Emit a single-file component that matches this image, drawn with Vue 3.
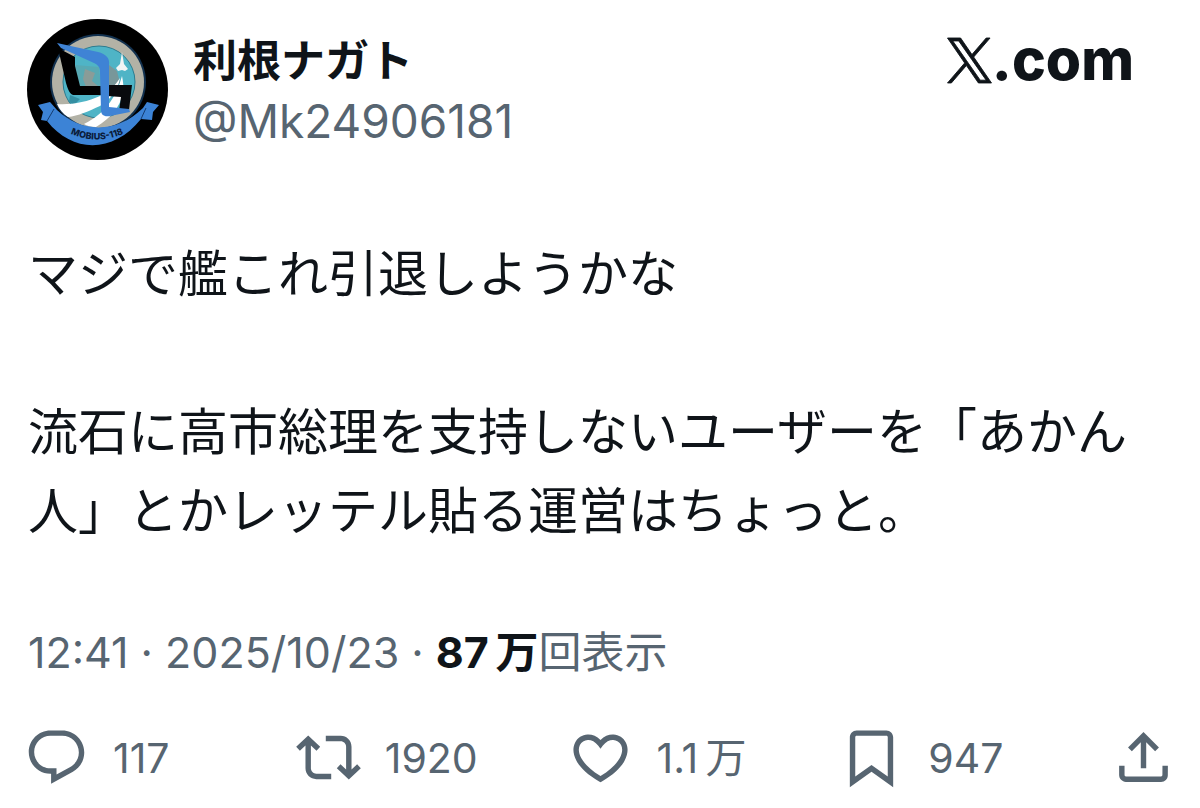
<template>
  <article class="post">
    <header class="head">
      <a class="author" href="#">
        <svg class="avatar" viewBox="0 0 141 141" aria-hidden="true">
          <circle cx="70.500" cy="70.500" r="70.500" fill="#000" />
          <circle cx="71" cy="63" r="48" fill="#12314f" />
          <circle cx="71" cy="63" r="46" fill="#b3b2a6" />
          <circle cx="72" cy="63" r="36" fill="#4fb4c6" stroke="#2c7c90" stroke-width="1" />
          <path d="M48 46l24 2 2 22-24 4z" fill="#58a9b3" />
          <path d="M58 50l10 4-3 8 6 5-12 1-3-8z" fill="#8a9c98" />
          <path d="M82 46l8 6 3 12-10 4-3-8z" fill="#78979a" />
          <path d="M43 76l10 4-6 6-5-3zM86 80l6 2-5 10h-5z" fill="#348fa2" />
          <path d="M30 85c14 1 30-2 43-8 9-5 15-10 20-18-2 12-10 22-20 28-11 5-22 10-32 11-5-3-9-8-11-13z" fill="#fff" />
          <path d="M95 57c-5 18-14 36-38 48 3 2 7 3 12 3 15-9 24-20 27-34 1-6 0-12-1-17z" fill="#fff" />
          <path d="M95 33l2 12 4 5-3 2-3-1-4 1-2-3 4-4z" fill="#f2f5f5" />
          <path d="M31 29l17 9v9l5 20h21v9H46c-4-2-5-6-7-12z" fill="#000" />
          <path d="M80 66h25l-3 25-10 1 2-14-14-1z" fill="#080a0d" />
          <path d="M30 24l41 9c8 2 12 6 11 13v42l20 2 1 3-20 4c-6 1-9-1-9-6l-1-38c0-5-2-7-6-9L34 29z" fill="#3f83d5" />
          <path d="M11 86l12-3 7 8c24 23 60 24 86-2l4-6 12 3-6 7-1 8-11-1c-27 34-68 35-94 2l-6-1 2-8z" fill="#3c83d6" />
          <path d="M20 102l7-12M114 100l5-11" stroke="#153c70" stroke-width="1" />
          <path id="ribbon" d="M36 111q34 19 68 0" fill="none" />
          <text class="motto"><textPath href="#ribbon" startOffset="50%" text-anchor="middle">MOBIUS-118</textPath></text>
        </svg>
        <span class="names">
          <strong class="name">利根ナガト</strong>
          <span class="handle">@Mk24906181</span>
        </span>
      </a>
      <a class="brand" href="#">
        <svg class="brand-mark" viewBox="0 0 1200 1227" role="img" aria-label="X">
          <path d="M714.163 519.284L1160.89 0H1055.03L667.137 450.887L357.328 0H0L468.492 681.821L0 1226.37H105.866L515.491 750.218L842.672 1226.37H1200L714.137 519.284H714.163ZM569.165 687.828L521.697 619.934L144.011 79.694H306.615L611.412 515.685L658.88 583.579L1055.08 1150.3H892.476L569.165 687.854V687.828Z" />
        </svg>
        <span>.com</span>
      </a>
    </header>

    <div class="body">
      <p v-for="(paragraph, i) in paragraphs" :key="i">{{ paragraph }}</p>
    </div>

    <p class="meta">
      <time datetime="2025-10-23T12:41">12:41 · 2025/10/23</time> · <strong>87&thinsp;万</strong>回表示
    </p>

    <footer class="actions">
      <button v-for="action in actions" :key="action.label" type="button" class="action" :aria-label="action.label">
        <svg class="icon" viewBox="0 0 24 24" aria-hidden="true"><path :d="action.icon" /></svg>
        <span v-if="action.count" class="count">{{ action.count }}</span>
      </button>
    </footer>
  </article>
</template>

<script setup>
const paragraphs = [
  'マジで艦これ引退しようかな',
  '流石に高市総理を支持しないユーザーを「あかん人」とかレッテル貼る運営はちょっと。',
]

const actions = [
  {
    label: '返信',
    count: '117',
    icon: 'M1.751 10c0-4.42 3.584-8 8.005-8h4.366c4.49 0 8.129 3.64 8.129 8.13 0 2.96-1.607 5.68-4.196 7.11l-8.054 4.46v-3.69h-.067c-4.49.1-8.183-3.51-8.183-8.01zm8.005-6c-3.317 0-6.005 2.69-6.005 6 0 3.37 2.77 6.08 6.138 6.01l.351-.01h1.761v2.3l5.087-2.81c1.951-1.08 3.163-3.13 3.163-5.36 0-3.39-2.744-6.13-6.129-6.13H9.756z',
  },
  {
    label: 'リポスト',
    count: '1920',
    icon: 'M4.5 3.88l4.432 4.14-1.364 1.46L5.5 7.55V16c0 1.1.896 2 2 2H13v2H7.5c-2.209 0-4-1.79-4-4V7.55L1.432 9.48.068 8.02 4.5 3.88zM16.5 6H11V4h5.5c2.209 0 4 1.79 4 4v8.45l2.068-1.93 1.364 1.46-4.432 4.14-4.432-4.14 1.364-1.46 2.068 1.93V8c0-1.1-.896-2-2-2z',
  },
  {
    label: 'いいね',
    count: '1.1\u2009万',
    icon: 'M16.697 5.5c-1.222-.06-2.679.51-3.89 2.16l-.805 1.09-.806-1.09C9.984 6.01 8.526 5.44 7.304 5.5c-1.243.07-2.349.78-2.91 1.91-.552 1.12-.633 2.78.479 4.82 1.074 1.97 3.257 4.27 7.129 6.61 3.87-2.34 6.052-4.64 7.126-6.61 1.111-2.04 1.03-3.7.477-4.82-.561-1.13-1.666-1.84-2.908-1.91zm4.187 7.69c-1.351 2.48-4.001 5.12-8.379 7.67l-.503.3-.504-.3c-4.379-2.55-7.029-5.19-8.382-7.67-1.36-2.5-1.41-4.86-.514-6.67.887-1.79 2.647-2.91 4.601-3.01 1.651-.09 3.368.56 4.798 2.01 1.429-1.45 3.146-2.1 4.796-2.01 1.954.1 3.714 1.22 4.601 3.01.896 1.81.846 4.17-.514 6.67z',
  },
  {
    label: 'ブックマーク',
    count: '947',
    icon: 'M4 4.5C4 3.12 5.119 2 6.5 2h11C18.881 2 20 3.12 20 4.5v18.44l-8-5.71-8 5.71V4.5zM6.5 4c-.276 0-.5.22-.5.5v14.56l6-4.29 6 4.29V4.5c0-.28-.224-.5-.5-.5h-11z',
  },
  {
    label: '共有',
    icon: 'M12 2.59l5.7 5.7-1.41 1.42L13 6.41V16h-2V6.41l-3.3 3.3-1.41-1.42L12 2.59zM21 15l-.02 3.51c0 1.38-1.12 2.49-2.5 2.49H5.5C4.11 21 3 19.88 3 18.5V15h2v3.5c0 .28.22.5.5.5h12.98c.28 0 .5-.22.5-.5L19 15h2z',
  },
]
</script>

<style>
body {
  margin: 0;
  background: #fff;
}
</style>

<style scoped>
.post {
  padding: 19px 24px 0;
  color: #0f1419;
  font-family: Inter, "Noto Sans CJK JP", sans-serif;
}

a {
  color: inherit;
  text-decoration: none;
}

.head {
  display: flex;
  justify-content: space-between;
  align-items: flex-start;
  padding: 0 42px 0 3px;
}

.author {
  display: flex;
  gap: 25px;
}

.avatar {
  width: 141px;
  height: 141px;
}

.motto {
  fill: #0b1c3a;
  font-size: 9px;
  font-weight: 800;
}

.names {
  display: flex;
  flex-direction: column;
  padding-top: 12px;
}

.name {
  font-size: 44px;
  line-height: 60px;
}

.handle {
  color: #576571;
  font-size: 46px;
  line-height: 60px;
}

.brand {
  display: flex;
  align-items: center;
  padding-top: 5px;
  font-size: 57px;
  font-weight: 800;
  line-height: 72px;
}

.brand-mark {
  width: 45px;
  height: 45px;
  overflow: visible;
  fill: currentColor;
  stroke: currentColor;
  stroke-width: 24;
}

.body {
  margin-top: 75px;
  padding: 0 4px;
  font-size: 50px;
  line-height: 79px;
}

.body p {
  margin: 0 0 79px;
}

.meta {
  margin: -8px 0 0;
  padding: 0 4px;
  color: #576571;
  font-size: 43px;
  line-height: 60px;
}

.meta strong {
  color: #0f1419;
}

.actions {
  display: flex;
  margin-top: 41px;
}

.action {
  display: flex;
  flex: 1;
  align-items: center;
  gap: 24px;
  padding: 0;
  border: 0;
  background: none;
  color: #576571;
  font: inherit;
  font-size: 41px;
  line-height: 65px;
  cursor: pointer;
}

.action:last-child {
  flex: none;
}

.icon {
  width: 65px;
  height: 65px;
  fill: currentColor;
}

.count {
  padding-top: 3px;
}
</style>
